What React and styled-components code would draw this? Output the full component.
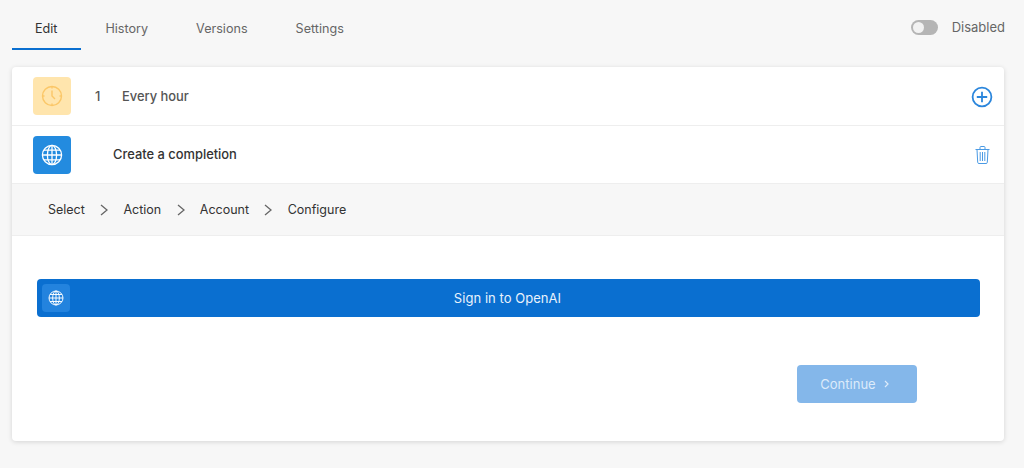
import React from "react";
import styled, { createGlobalStyle } from "styled-components";

const Global = createGlobalStyle`
  html, body { margin: 0; padding: 0; background: #f7f7f7; }
  body { font-family: Inter, "Liberation Sans", sans-serif; -webkit-font-smoothing: antialiased; }
`;

const Page = styled.div`
  width: 1024px;
  height: 468px;
  padding: 0 19px 0 12px;
  box-sizing: border-box;
  overflow: hidden;
`;

const TopBar = styled.header`
  height: 67px;
  display: flex;
  justify-content: space-between;
  align-items: flex-start;
`;

const Tabs = styled.nav`
  display: flex;
  height: 50px;
`;

const Tab = styled.div`
  box-sizing: border-box;
  height: 50px;
  padding: 9px 24px 0 ${(p) => (p.$active ? "23px" : "24px")};
  display: flex;
  align-items: center;
  font-size: 12.6px;
  color: ${(p) => (p.$active ? "#333" : "#666")};
  border-bottom: 2px solid ${(p) => (p.$active ? "#0a6fd0" : "transparent")};
`;

const StatusBox = styled.div`
  display: flex;
  align-items: center;
  gap: 14px;
  height: 54px;
  font-size: 13px;
  color: #666;
`;

const Toggle = styled.span`
  position: relative;
  display: block;
  width: 27px;
  height: 15px;
  border-radius: 8px;
  background: #b5b5b5;
  &::after {
    content: "";
    position: absolute;
    left: 2px;
    top: 2px;
    width: 11px;
    height: 11px;
    border-radius: 50%;
    background: #f2f2f2;
  }
`;

const Card = styled.main`
  width: 992px;
  height: 374px;
  background: #fff;
  border-radius: 4px;
  box-shadow: 0 1px 5px rgba(0, 0, 0, 0.14);
  display: flex;
  flex-direction: column;
`;

const StepRow = styled.div`
  box-sizing: border-box;
  height: ${(p) => p.$h}px;
  display: flex;
  align-items: center;
  padding: 0 11px 0 21px;
  border-bottom: 1px solid #eee;
`;

const IconTile = styled.div`
  width: 38px;
  height: 38px;
  border-radius: 4px;
  display: flex;
  align-items: center;
  justify-content: center;
  background: ${(p) => p.$bg};
  color: ${(p) => p.$fg};
  flex: none;
`;

const StepNumber = styled.span`
  font-size: 12.9px;
  font-weight: 500;
  color: #555;
  margin-left: 24px;
  width: 27px;
`;

const StepTitle = styled.span`
  font-size: 12.9px;
  font-weight: 500;
  color: ${(p) => p.$c};
  margin-left: ${(p) => p.$ml || 0}px;
`;

const RowAction = styled.div`
  margin-left: auto;
  width: 22px;
  display: flex;
  justify-content: center;
  padding-top: ${(p) => p.$pt || 0}px;
  color: ${(p) => p.$c};
`;

const Crumbs = styled.div`
  box-sizing: border-box;
  height: 52px;
  display: flex;
  align-items: center;
  padding: 0 0 0 36px;
  background: #f7f7f7;
  border-bottom: 1px solid #eee;
  font-size: 12.5px;
  color: #333;
`;

const Chevron = styled.span`
  display: flex;
  margin: 0 15.3px;
  color: #666;
`;

const Body = styled.div`
  flex: 1;
  padding: 43px 24px 0 25px;
  display: flex;
  flex-direction: column;
`;

const SignIn = styled.div`
  position: relative;
  height: 38px;
  padding-right: 2px;
  border-radius: 4px;
  background: #0a6fd0;
  color: #e8f2fc;
  font-size: 13px;
  letter-spacing: 0.05px;
  display: flex;
  align-items: center;
  justify-content: center;
`;

const SignInIcon = styled.span`
  position: absolute;
  left: 5px;
  top: 5px;
  width: 28px;
  height: 28px;
  border-radius: 4px;
  background: #2383de;
  display: flex;
  align-items: center;
  justify-content: center;
  color: #fff;
`;

const Footer = styled.div`
  margin-top: 48px;
  padding-left: 760px;
`;

const Continue = styled.div`
  box-sizing: border-box;
  width: 120px;
  height: 38px;
  padding-right: 5px;
  border-radius: 4px;
  background: #84b7ea;
  color: #dcebfa;
  font-size: 13px;
  display: flex;
  align-items: center;
  justify-content: center;
  gap: 8px;
`;

const Globe = ({ size }) => (
  <svg width={size} height={size} viewBox="0 0 22 22" fill="none" stroke="currentColor" strokeWidth="1.3">
    <circle cx="11" cy="11" r="9.6" />
    <ellipse cx="11" cy="11" rx="4.6" ry="9.6" />
    <path d="M11 1.4v19.2M1.4 11h19.2M2.8 6.200h16.400M2.800 15.800h16.400" />
  </svg>
);

const Clock = () => (
  <svg width="22" height="22" viewBox="0 0 22 22" fill="none" stroke="#fbc768" strokeWidth="1.4">
    <circle cx="11" cy="11" r="9.5" />
    <path d="M11 5.500V11l3 3M11 1.500v2M11 18.500v2M1.500 11h2M18.500 11h2" />
  </svg>
);

const Plus = () => (
  <svg width="22" height="22" viewBox="0 0 22 22" fill="none" stroke="currentColor" strokeWidth="1.8">
    <circle cx="11" cy="11" r="9.4" />
    <path d="M11 5.800v10.400M5.800 11h10.400" />
  </svg>
);

const Trash = () => (
  <svg width="15" height="18" viewBox="0 0 15 18" fill="none" stroke="currentColor" strokeWidth="1">
    <path d="M.5 3.500h14M5 3.500V1.500a1 1 0 0 1 1-1h3a1 1 0 0 1 1 1v2M2 3.500l.7 12.800a1.200 1.200 0 0 0 1.200 1.200h7.200a1.200 1.200 0 0 0 1.200-1.200L13 3.500" />
    <path d="M5.200 6v9M7.500 6v9M9.800 6v9" />
  </svg>
);

const Angle = () => (
  <svg width="8" height="12" viewBox="0 0 8 12" fill="none" stroke="currentColor" strokeWidth="1.3">
    <path d="M1 1l6 5-6 5" />
  </svg>
);

const SmallAngle = () => (
  <svg width="5" height="8" viewBox="0 0 5 8" fill="none" stroke="currentColor" strokeWidth="1.2">
    <path d="M1 1l3 3-3 3" />
  </svg>
);

export default function App() {
  return (
    <Page>
      <Global />
      <TopBar>
        <Tabs>
          <Tab $active>Edit</Tab>
          <Tab>History</Tab>
          <Tab>Versions</Tab>
          <Tab>Settings</Tab>
        </Tabs>
        <StatusBox>
          <Toggle />
          <span>Disabled</span>
        </StatusBox>
      </TopBar>
      <Card>
        <StepRow $h={59}>
          <IconTile $bg="#ffe5ad"><Clock /></IconTile>
          <StepNumber>1</StepNumber>
          <StepTitle $c="#555">Every hour</StepTitle>
          <RowAction $c="#2b86dc" $pt={1}><Plus /></RowAction>
        </StepRow>
        <StepRow $h={58}>
          <IconTile $bg="#238bdf" $fg="#fff"><Globe size={22} /></IconTile>
          <StepTitle $c="#333" $ml={42}>Create a completion</StepTitle>
          <RowAction $c="#4a9ae4"><Trash /></RowAction>
        </StepRow>
        <Crumbs>
          <span>Select</span>
          <Chevron><Angle /></Chevron>
          <span>Action</span>
          <Chevron><Angle /></Chevron>
          <span>Account</span>
          <Chevron><Angle /></Chevron>
          <span>Configure</span>
        </Crumbs>
        <Body>
          <SignIn>
            <SignInIcon><Globe size={16} /></SignInIcon>
            Sign in to OpenAI
          </SignIn>
          <Footer>
            <Continue>Continue <SmallAngle /></Continue>
          </Footer>
        </Body>
      </Card>
    </Page>
  );
}
